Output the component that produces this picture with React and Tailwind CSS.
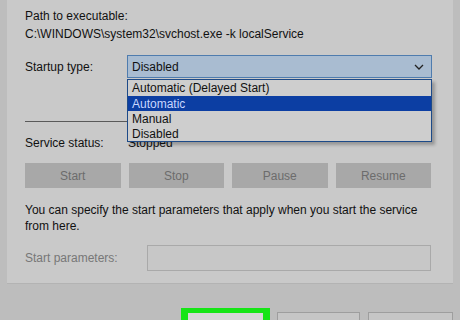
export default function App() {
  const font = { fontFamily: '"Liberation Sans", Arial, sans-serif' }
  return (
    <div className="w-[460px] h-[320px] overflow-hidden bg-[#bdbdbd] flex flex-col text-[12px] leading-[16px] text-[#111]" style={font}>
      <div className="mx-[7px] h-[284px] shrink-0 bg-[#c9c9c9] border-b border-[#b3b3b3] pl-[18px] pr-[21px] pt-[8px] flex flex-col">
        <div>Path to executable:</div>
        <div className="mt-[2px]">C:\WINDOWS\system32\svchost.exe -k localService</div>

        <div className="mt-[13px] flex items-center">
          <div className="w-[102px] shrink-0">Startup type:</div>
          <div className="relative w-[305px]">
            <div className="h-[23px] bg-[#a9bcd1] border border-[#4f7cae] flex items-center justify-between pl-[4px] pr-[7px]">
              <span>Disabled</span>
              <svg width="10" height="6" viewBox="0 0 10 6" fill="none" stroke="#222" strokeWidth="1.3">
                <path d="M1 1l4 4 4-4" />
              </svg>
            </div>
            <div className="absolute left-0 top-[24px] w-[305px] z-10 bg-[#cecece] border border-[#1d4a88] shadow-[3px_3px_3px_rgba(0,0,0,0.25)]">
              <div className="h-[16px] pl-[4px] flex items-center">Automatic (Delayed Start)</div>
              <div className="h-[15px] pl-[4px] flex items-center bg-[#0c3ea3] text-[#c8d6ff]">Automatic</div>
              <div className="h-[15px] pl-[4px] flex items-center">Manual</div>
              <div className="h-[15px] pl-[4px] flex items-center">Disabled</div>
            </div>
          </div>
        </div>

        <div className="mt-[43px] h-px w-[406px] bg-[#5a5a5a]" />

        <div className="mt-[13px] flex">
          <div className="w-[103px] shrink-0">Service status:</div>
          <div>Stopped</div>
        </div>

        <div className="mt-[12px] w-[406px] grid grid-cols-4 gap-[8px]">
          {['Start', 'Stop', 'Pause', 'Resume'].map((b) => (
            <div key={b} className="h-[25px] bg-[#a8a8a8] text-[#6c6c6c] flex items-center justify-center">
              {b}
            </div>
          ))}
        </div>

        <div className="mt-[14px]">
          You can specify the start parameters that apply when you start the service
          <br />
          from here.
        </div>

        <div className="mt-[11px] flex items-center">
          <div className="w-[122px] shrink-0 text-[#777]">Start parameters:</div>
          <div className="h-[26px] w-[284px] border border-[#a9a9a9] bg-[#c7c7c7]" />
        </div>
      </div>

      <div className="flex items-start pl-[181px] mt-[24px] gap-[7px]">
        <div className="w-[89px] h-[20px] bg-[#16e516] pt-[5px] px-[7px]">
          <div className="h-full bg-[#d6d6d6]" />
        </div>
        <div className="mt-[4px] w-[83px] h-[16px] bg-[#c6c6c6] border border-[#9e9e9e]" />
        <div className="mt-[4px] ml-[1px] w-[85px] h-[16px] bg-[#c6c6c6] border border-[#9e9e9e]" />
      </div>
    </div>
  )
}
